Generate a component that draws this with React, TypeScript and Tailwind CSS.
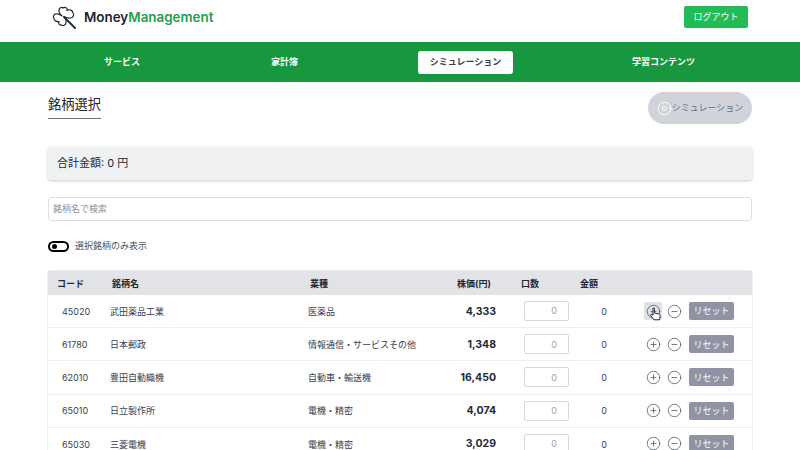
import { CirclePlus, CircleMinus, CirclePlay } from "lucide-react";

const rows = [
  ["45020", "武田薬品工業", "医薬品", "4,333"],
  ["61780", "日本郵政", "情報通信・サービスその他", "1,348"],
  ["62010", "豊田自動織機", "自動車・輸送機", "16,450"],
  ["65010", "日立製作所", "電機・精密", "4,074"],
  ["65030", "三菱電機", "電機・精密", "3,029"],
];

function Clover() {
  return (
    <svg width="24" height="24" viewBox="0 0 24 24" fill="none" stroke="#1f2937" strokeWidth="1.2" strokeLinejoin="round" strokeLinecap="round">
      <path d="M10 11 C8 9 6.5 7.5 7 5.5 C7 3 9.5 1.5 11 3 C13 1.5 16 3 15 5.5 C17 4 21 5 21 8 C22.5 10 21 13 18.5 13 C16.5 13.5 14 12.5 12 11.5 C13.5 13.5 14.5 15.5 14 17.5 C14 20 11 21.5 9.5 20 C7.5 20.5 6 18.5 7 16.5 C5 17 2 16 2 13.5 C0.5 11.5 2 8.5 4.5 9 C6 8.5 8 9.5 10 11 Z" />
      <path d="M12 12 L23 23" strokeWidth="1.8" />
    </svg>
  );
}

function Hand() {
  return (
    <svg className="absolute left-[5px] top-[5px]" width="13" height="14" viewBox="0 0 13 14">
      <path d="M4 1.5 C4 .6 5.4 .6 5.4 1.5 V6 L9.8 7 C11 7.3 11.4 8 11.2 9 L10.5 12.8 H5 L1.8 8.6 C1.2 7.6 2.4 6.8 3.2 7.5 L4 8.3 Z" fill="#fff" stroke="#1f2937" strokeWidth="1" strokeLinejoin="round" />
    </svg>
  );
}

export default function App() {
  return (
    <div className="h-[450px] overflow-hidden bg-white font-['Inter','Noto_Sans_CJK_JP',sans-serif] text-[#1f2937]">
      <header className="flex h-[42px] items-center justify-between px-[52px] pb-[8px]">
        <div className="flex items-center gap-[8px]">
          <Clover />
          <div className="text-[13.4px] font-semibold">
            <span className="text-[#1f2230]">Money</span>
            <span className="text-[#1f9d4d]">Management</span>
          </div>
        </div>
        <button className="flex h-[22px] w-[64px] items-center justify-center rounded-[2px] bg-[#22bb55] text-[9px] text-white">
          ログアウト
        </button>
      </header>

      <nav className="flex h-[40px] items-center whitespace-nowrap bg-[#17983f] pl-[104px] text-[9px] font-bold text-white">
        <span className="w-[36px]">サービス</span>
        <span className="ml-[131px] w-[27px]">家計簿</span>
        <span className="ml-[120px] flex h-[23px] w-[95px] items-center justify-center rounded-[3px] bg-white text-[#374151]">
          シミュレーション
        </span>
        <span className="ml-[119px]">学習コンテンツ</span>
      </nav>

      <main className="px-[48px]">
        <div className="flex h-[65px] items-start justify-between pt-[10px]">
          <h1 className="mt-[1px] border-b border-[#6b7280] pb-[2px] text-[13.25px] leading-[23px] text-[#27272a]">銘柄選択</h1>
          <button className="flex h-[32px] w-[104px] items-center justify-center rounded-full bg-[#d1d3da] text-[9px] text-[#6b7280]">
            <CirclePlay size={15} strokeWidth={1.6} className="text-white" />
            シミュレーション
          </button>
        </div>

        <div className="flex h-[33px] items-center rounded-[2px] bg-[#f0f1f3] pl-[9px] text-[11px] text-[#1f2937] shadow-[0_1px_3px_rgba(0,0,0,0.2)]">
          合計金額: 0 円
        </div>

        <div className="mt-[17px] flex h-[24px] items-center rounded-[3px] border border-[#dcdfe4] pl-[4px] text-[9px] text-[#8b919c]">
          銘柄名で検索
        </div>

        <div className="mt-[19px] flex h-[12px] items-center gap-[6px]">
          <span className="flex h-[11px] w-[21px] items-center rounded-full border-2 border-black bg-white pl-[2px]">
            <span className="h-[5px] w-[5px] rounded-full bg-black" />
          </span>
          <span className="text-[9px] text-[#4b5563]">選択銘柄のみ表示</span>
        </div>

        <div className="mt-[19px] shadow-[0_0_2px_rgba(0,0,0,0.2)]">
          <div className="grid h-[24px] grid-cols-[64px_198px_146px_36px_76px_42px_142px] items-center whitespace-nowrap bg-[#e1e3e7] pt-[1px] text-[9px] font-bold text-[#1f2937]">
            <span className="pl-[9px]">コード</span>
            <span>銘柄名</span>
            <span>業種</span>
            <span className="text-center">株価(円)</span>
            <span className="text-center">口数</span>
            <span className="text-center">金額</span>
            <span />
          </div>
          {rows.map((r, i) => (
            <div key={r[0]} className="grid h-[33.2px] grid-cols-[62px_198px_146px_42px_73px_42px_141px] items-center whitespace-nowrap border-b border-[#eceef0] text-[9px] text-[#374151]">
              <span className="pl-[14px] pt-[1px]">{r[0]}</span>
              <span className="pt-[1px]">{r[1]}</span>
              <span className="pt-[1px]">{r[2]}</span>
              <span className="pt-[1px] text-right text-[10.5px] font-bold text-[#1f2937]">{r[3]}</span>
              <div className="flex justify-end">
                <div className="flex h-[20px] w-[45px] items-center justify-end rounded-[2px] border border-[#d6d9de] pr-[11px] text-[#9ca3af]">0</div>
              </div>
              <span className="pt-[1px] text-right pr-[4px]">0</span>
              <div className="flex items-center pl-[33px]">
                <span className={"relative flex h-[18px] w-[18px] items-center justify-center rounded-[2px] " + (i === 0 ? "bg-[#dfe1e5]" : "")}>
                  <CirclePlus size={15} strokeWidth={1.2} className="text-[#4b5563]" />
                  {i === 0 && <Hand />}
                </span>
                <CircleMinus size={15} strokeWidth={1.2} className="ml-[5px] text-[#4b5563]" />
                <span className="ml-[7px] flex h-[18px] w-[45px] items-center justify-center rounded-[2px] bg-[#8e94a5] text-[9px] text-white">リセット</span>
              </div>
            </div>
          ))}
        </div>
      </main>
    </div>
  );
}
